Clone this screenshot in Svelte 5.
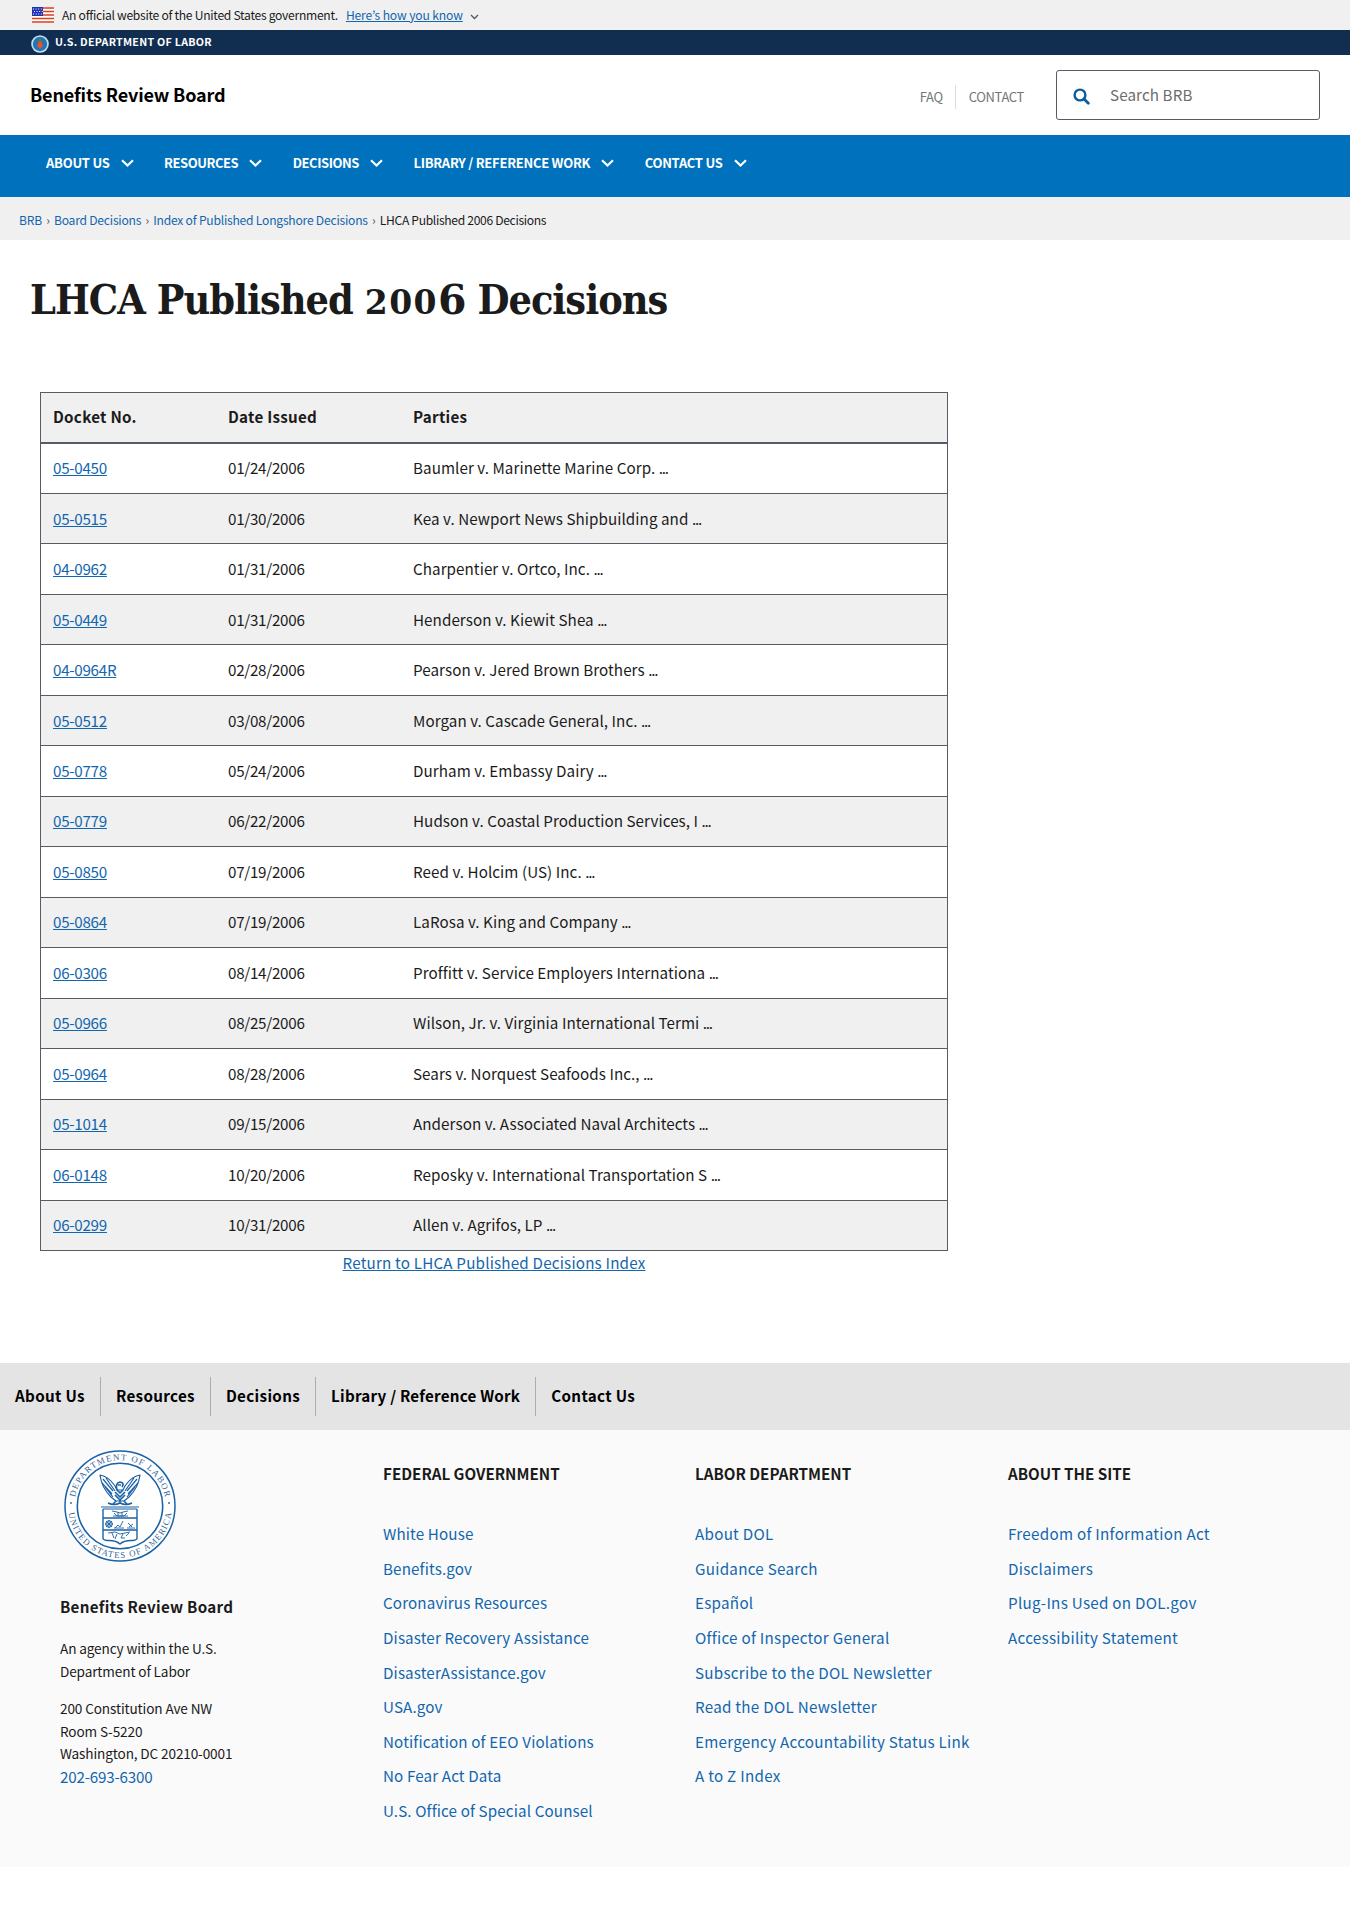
<script>
  const nav = ['About Us', 'Resources', 'Decisions', 'Library / Reference Work', 'Contact Us'];
  const crumbs = ['BRB', 'Board Decisions', 'Index of Published Longshore Decisions'];
  const rows = [
    ['05-0450', '01/24/2006', 'Baumler v. Marinette Marine Corp.'],
    ['05-0515', '01/30/2006', 'Kea v. Newport News Shipbuilding and'],
    ['04-0962', '01/31/2006', 'Charpentier v. Ortco, Inc.'],
    ['05-0449', '01/31/2006', 'Henderson v. Kiewit Shea'],
    ['04-0964R', '02/28/2006', 'Pearson v. Jered Brown Brothers'],
    ['05-0512', '03/08/2006', 'Morgan v. Cascade General, Inc.'],
    ['05-0778', '05/24/2006', 'Durham v. Embassy Dairy'],
    ['05-0779', '06/22/2006', 'Hudson v. Coastal Production Services, I'],
    ['05-0850', '07/19/2006', 'Reed v. Holcim (US) Inc.'],
    ['05-0864', '07/19/2006', 'LaRosa v. King and Company'],
    ['06-0306', '08/14/2006', 'Proffitt v. Service Employers Internationa'],
    ['05-0966', '08/25/2006', 'Wilson, Jr. v. Virginia International Termi'],
    ['05-0964', '08/28/2006', 'Sears v. Norquest Seafoods Inc.,'],
    ['05-1014', '09/15/2006', 'Anderson v. Associated Naval Architects'],
    ['06-0148', '10/20/2006', 'Reposky v. International Transportation S'],
    ['06-0299', '10/31/2006', 'Allen v. Agrifos, LP']
  ];
  const columns = [
    {
      title: 'Federal Government',
      links: ['White House', 'Benefits.gov', 'Coronavirus Resources', 'Disaster Recovery Assistance', 'DisasterAssistance.gov', 'USA.gov', 'Notification of EEO Violations', 'No Fear Act Data', 'U.S. Office of Special Counsel']
    },
    {
      title: 'Labor Department',
      links: ['About DOL', 'Guidance Search', 'Español', 'Office of Inspector General', 'Subscribe to the DOL Newsletter', 'Read the DOL Newsletter', 'Emergency Accountability Status Link', 'A to Z Index']
    },
    {
      title: 'About the Site',
      links: ['Freedom of Information Act', 'Disclaimers', 'Plug-Ins Used on DOL.gov', 'Accessibility Statement']
    }
  ];
</script>

<div class="page">
  <div class="banner">
    <svg class="flag" width="22" height="16" viewBox="0 0 22 16">
      <rect width="22" height="16" fill="#fff" />
      <path d="M0 1h22M0 4.500h22M0 8h22M0 11.500h22M0 15h22" stroke="#db3e1f" stroke-width="1.700" />
      <rect width="11" height="9" fill="#1e33b1" />
      <path d="M1 2h9M2 4.500h9M1 7h9" stroke="#fff" stroke-width="1" stroke-dasharray="1 1.600" />
    </svg>
    <span>An official website of the United States government.</span>
    <a href="#know">Here’s how you know</a>
    <svg class="tiny" width="9" height="6" viewBox="0 0 9 6"><path d="M1 1l3.500 3.500L8 1" fill="none" stroke="#4a5a66" stroke-width="1.300" /></svg>
  </div>

  <div class="dept">
    <svg width="18" height="18" viewBox="0 0 18 18">
      <circle cx="9" cy="9" r="8.800" fill="#c9dbe6" />
      <circle cx="9" cy="9" r="7.200" fill="#1b78bd" />
      <path d="M9 2.500l2.200 5H6.800z" fill="#8a6a3c" />
      <path d="M6.300 7h5.400v4.500L9 14l-2.700-2.500z" fill="#d9543a" />
      <path d="M5 6.500l2 2M13 6.500l-2 2" stroke="#3c6f6a" stroke-width="1.200" />
    </svg>
    <span>U.S. DEPARTMENT OF LABOR</span>
  </div>

  <header>
    <strong class="agency">Benefits Review Board</strong>
    <div class="tools">
      <a class="faq" href="#faq">FAQ</a>
      <a class="contact" href="#contact">CONTACT</a>
      <div class="search">
        <svg width="17" height="17" viewBox="0 0 17 17">
          <circle cx="7" cy="7" r="5.400" fill="none" stroke="#0b5c9c" stroke-width="2.400" />
          <path d="M11 11l4.300 4.300" stroke="#0b5c9c" stroke-width="2.800" stroke-linecap="round" />
        </svg>
        <span>Search BRB</span>
      </div>
    </div>
  </header>

  <nav class="main-nav">
    {#each nav as item}
      <a href="#nav">
        <span>{item}</span>
        <svg width="13" height="8" viewBox="0 0 13 8"><path d="M1 1.200l5.500 5.300L12 1.200" fill="none" stroke="#fff" stroke-width="2.200" /></svg>
      </a>
    {/each}
  </nav>

  <div class="crumbs">
    {#each crumbs as crumb}
      <a href="#crumb">{crumb}</a><span class="sep">›</span>
    {/each}
    <span class="current">LHCA Published 2006 Decisions</span>
  </div>

  <main>
    <h1>LHCA Published <span class="old">200</span><span class="six">6</span> Decisions</h1>
    <table>
      <thead>
        <tr><th class="c1">Docket No.</th><th class="c2">Date Issued</th><th>Parties</th></tr>
      </thead>
      <tbody>
        {#each rows as [docket, date, parties]}
          <tr>
            <td class="num"><a href="#docket">{docket}</a></td>
            <td class="num">{date}</td>
            <td>{parties} <span class="dots">...</span></td>
          </tr>
        {/each}
      </tbody>
    </table>
    <p class="return"><a href="#index">Return to LHCA Published Decisions Index</a></p>
  </main>

  <footer>
    <div class="foot-nav">
      {#each nav as item}<a href="#foot">{item}</a>{/each}
    </div>
    <div class="foot-body">
      <div class="about">
        <svg class="seal" width="112" height="112" viewBox="-56 -56 112 112">
          <defs>
            <path id="seal-top" d="M-45.800 0A45.800 45.800 0 0 1 45.800 0" />
            <path id="seal-bottom" d="M-52 0A52 52 0 0 0 52 0" />
          </defs>
          <circle r="55" fill="#fff" stroke="#1a62a5" stroke-width="1.500" />
          <circle r="42.700" fill="none" stroke="#1a62a5" stroke-width="1.600" />
          <g class="ring">
            <text textLength="126" text-anchor="middle"><textPath href="#seal-top" startOffset="50%">DEPARTMENT OF LABOR</textPath></text>
            <text textLength="149" text-anchor="middle"><textPath href="#seal-bottom" startOffset="50%">UNITED STATES OF AMERICA</textPath></text>
          </g>
          <circle cx="-49" cy="-3" r=".9" fill="#1a62a5" />
          <circle cx="49" cy="-3" r=".9" fill="#1a62a5" />
          <g fill="none" stroke="#1a62a5" stroke-width="1.200" stroke-linejoin="round">
            <path d="M-20-31C-19-23-16-16-9-9L-4-5H4L9-9C16-16 19-23 20-31C14-30 9-26 5-20L3-16H-3L-5-20C-9-26-14-30-20-31Z" />
            <path d="M-17-27L-7-15M-18-23L-8-12M-14-28L-5-15M-15-19L-7-9M17-27L7-15M18-23L8-12M14-28L5-15M15-19L7-9" />
            <path d="M-3-16Q-5-23 0-24Q5-23 2-19M-5-14L0-9L5-14M-5-11L0-6L5-11M-3-16L0-13L3-16M-2-21H1" stroke-width="1.700" />
            <path d="M-4-5L-7-2M4-5L7-2M0-6V-2M-12-3Q-6 0 0-3Q6 0 12-3" stroke-width="1.500" />
            <path d="M-19 1H19M-17 3H17" stroke-width="1.200" />
            <path d="M-17 3V32Q-17 34-13 34.500Q-4 34 0 38Q4 34 13 34.500Q17 34 17 32V3M-17 12H17M-17 24H17" stroke-width="1.400" />
            <path d="M-8 5L-3 6Q0 8 3 6L8 5M-6 7L-3 10H4L7 7M-2 6V10M2 6V10M-7 10H8" stroke-width=".9" />
            <path d="M-5 22L-2 19L0 21L3 15M-6 22H4M7 22H15M8 17L12 21M13 18L9 21" stroke-width=".9" />
            <circle cx="-11" cy="18" r="3.300" stroke-width="1" />
            <path d="M-15 18H-7M-11 14V22M-14 15L-8 21M-14 21L-8 15M-12 27L-5 26L0 28L10 26M-8 27L-6 32M-3 28L-5 33M3 28L1 32H5M9 27L6 30" stroke-width=".9" />
          </g>
        </svg>
        <strong>Benefits Review Board</strong>
        <p class="within">An agency within the U.S.<br />Department of Labor</p>
        <p class="address">200 Constitution Ave NW<br />Room S-5220<br />Washington, DC 20210-0001</p>
        <a class="phone" href="#phone">202-693-6300</a>
      </div>
      {#each columns as column}
        <div class="col">
          <h2>{column.title}</h2>
          <ul>
            {#each column.links as link}<li><a href="#link">{link}</a></li>{/each}
          </ul>
        </div>
      {/each}
    </div>
  </footer>
</div>

<style>
  :global(body) { margin: 0; background: #fff; }
  .page { width: 1350px; height: 1925px; overflow: hidden; color: #1b1b1b; font: 15.2px/24px "Noto Sans CJK KR", "Noto Sans", sans-serif; }
  .page * { box-sizing: border-box; }
  a { color: #1266ae; white-space: nowrap; }
  svg { flex: none; display: block; }
  .banner { height: 30px; background: #f0f0f0; display: flex; align-items: center; padding-left: 32px; font-size: 12.1px; line-height: 30px; white-space: nowrap; letter-spacing: -0.28px; }
  .banner span { margin: 0 8px; }
  .banner a { letter-spacing: -0.13px; }
  .tiny { margin: 3px 0 0 7px; }
  .dept { height: 25px; background: #112e51; display: flex; align-items: center; padding-left: 31px; gap: 6px; color: #fff; font-size: 10.7px; font-weight: 700; letter-spacing: 0.26px; }
  .dept svg { margin-top: 3px; }
  .dept span { margin-top: -1px; }
  header { height: 80px; display: flex; align-items: center; justify-content: space-between; padding: 0 30px; }
  .agency { font-size: 18px; color: #000; letter-spacing: -0.15px; margin-top: -2px; }
  .tools { display: flex; align-items: center; font-size: 13px; letter-spacing: -0.35px; }
  .tools a { color: #757575; text-decoration: none; margin-top: 3px; }
  .faq { padding-right: 12px; border-right: 1px solid #dcdcdc; }
  .contact { padding: 0 32px 0 13px; }
  .search { width: 264px; height: 50px; border: 1px solid #565c65; border-radius: 3px; display: flex; align-items: center; gap: 20px; padding-left: 16px; color: #6c6c6c; font-size: 15.2px; letter-spacing: 0.1px; }
  .search svg { margin-top: 3px; }
  .search span { margin-top: -2px; }
  .main-nav { height: 62px; background: #0071bc; display: flex; gap: 30.5px; padding: 16px 0 0 46px; }
  .main-nav a { display: flex; height: 24px; align-items: center; gap: 11px; color: #fff; text-decoration: none; text-transform: uppercase; font-size: 13px; font-weight: 700; letter-spacing: -0.27px; }
  .main-nav a:nth-child(2), .main-nav a:nth-child(3) { letter-spacing: -0.45px; }
  .crumbs { height: 43px; background: #f0f0f0; display: flex; align-items: center; padding: 2px 0 0 19px; font-size: 12.1px; letter-spacing: -0.22px; }
  .crumbs a { text-decoration: none; }
  .sep { width: 12px; text-align: center; color: #555; }
  .current { letter-spacing: -0.32px; }
  main { height: 1123px; padding: 30px 0 0 30px; }
  h1 { margin: 0 0 72px; height: 50px; font: 700 41px/60px "DejaVu Serif Condensed", "DejaVu Serif", serif; font-stretch: condensed; letter-spacing: -1px; white-space: nowrap; }
  .old { font-size: 33px; font-stretch: normal; font-family: "DejaVu Serif", serif; letter-spacing: 1.5px; }
  .six { font-size: 41px; font-stretch: normal; font-family: "DejaVu Serif", serif; letter-spacing: -1px; }
  table { margin-left: 10px; width: 908px; border-collapse: collapse; table-layout: fixed; border: 1px solid #565c65; }
  tr { height: 50.47px; }
  th, td { padding: 0 12px 2px; text-align: left; border-bottom: 1px solid #565c65; vertical-align: middle; letter-spacing: 0.06px; }
  th { background: #f0f0f0; border-bottom: 2px solid #565c65; letter-spacing: 0.26px; }
  .num { letter-spacing: -0.28px; }
  .dots { letter-spacing: -1.2px; }
  tbody tr:nth-child(even) { background: #f0f0f0; }
  .c1 { width: 175.5px; }
  .c2 { width: 185px; }
  .return { margin: -1px 0 0 10px; width: 908px; text-align: center; letter-spacing: 0.19px; }
  .foot-nav { height: 67px; background: #e4e4e4; display: flex; align-items: center; padding-bottom: 1px; }
  .foot-nav a { height: 39px; line-height: 36px; padding: 0 15px; color: #000; font-weight: 700; text-decoration: none; letter-spacing: 0.33px; }
  .foot-nav a:nth-child(4) { letter-spacing: 0.22px; }
  .foot-nav a + a { border-left: 1px solid #a9aeb1; }
  .foot-body { height: 437px; background: #fafafa; display: grid; grid-template-columns: 323px 312px 313px 1fr; padding-left: 60px; }
  .about { padding-top: 20px; }
  .seal { margin-left: 4px; }
  .ring { font: 8.8px "Liberation Serif", serif; fill: #35669a; }
  .about strong { display: block; margin-top: 32px; letter-spacing: 0.27px; }
  .about p { margin: 0; font-size: 13.6px; line-height: 22.5px; letter-spacing: -0.13px; }
  .about .within { margin-top: 19px; }
  .about .address { margin-top: 15px; }
  .phone { display: block; text-decoration: none; letter-spacing: -0.2px; margin-top: -1px; }
  h2 { margin: 31px 0; font-size: 15.2px; line-height: 24px; text-transform: uppercase; }
  ul { list-style: none; margin: 0; padding: 0; }
  li { height: 34.65px; line-height: 34px; letter-spacing: 0.13px; }
  .col:nth-child(3) li { letter-spacing: 0.27px; }
  .col:nth-child(4) li { letter-spacing: 0.28px; }
  li a { text-decoration: none; }
</style>
